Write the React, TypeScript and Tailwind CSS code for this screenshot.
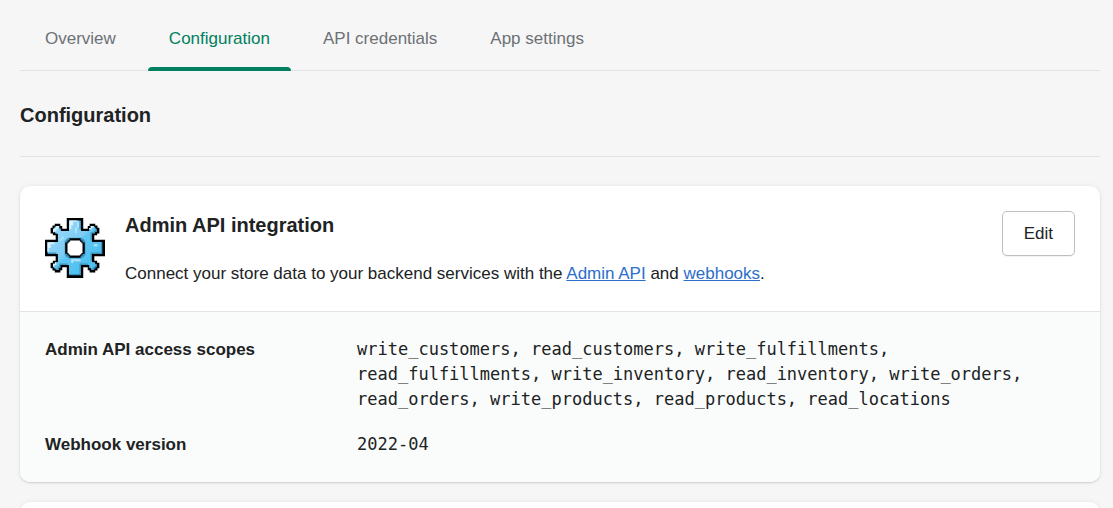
import React from "react";

type Point = [number, number];

const tabs = ["Overview", "Configuration", "API credentials", "App settings"];

const scopes = [
  "write_customers",
  "read_customers",
  "write_fulfillments",
  "read_fulfillments",
  "write_inventory",
  "read_inventory",
  "write_orders",
  "read_orders",
  "write_products",
  "read_products",
  "read_locations",
];

// Builds a closed shape on the 32x32 grid from its top-left quarter.
function mirrored(quarter: Point[]): string {
  const flipX = (p: Point[]): Point[] => p.map(([x, y]) => [32 - x, y]);
  const flipY = (p: Point[]): Point[] => p.map(([x, y]) => [x, 32 - y]);
  const left = [...quarter, ...flipY(quarter).reverse()];
  const all = [...left, ...flipX(left).reverse()];
  return "M" + all.map((p) => p.join(" ")).join("L") + "Z";
}

const gearOuter = mirrored([
  [11.6, 0], [11.6, 5.7], [9.2, 5.7], [9.2, 4.2], [8.2, 4.2], [8.2, 3], [5.2, 3], [5.2, 4], [4, 4],
  [4, 5.2], [3, 5.2], [3, 8.2], [4.2, 8.2], [4.2, 9.2], [5.7, 9.2], [5.7, 11.6], [0, 11.6],
]);

const gearInner = mirrored([
  [12.8, 1.3], [12.8, 6.9], [8.4, 6.9], [8.4, 5.3], [7.6, 5.3], [7.6, 4.3], [5.6, 4.3],
  [5.6, 5], [5, 5], [5, 5.6], [4.3, 5.6], [4.3, 7.6], [5.3, 7.6], [5.3, 8.4], [6.9, 8.4],
  [6.9, 12.8], [1.3, 12.8],
]);

const holeShade = mirrored([[12, 10.5], [12, 11.2], [11.2, 11.2], [11.2, 12], [10.5, 12]]);
const holeOuter = mirrored([[13, 10.8], [13, 12], [12, 12], [12, 13], [10.8, 13]]);
const holeInner = mirrored([[13.4, 12], [13.4, 12.6], [12.6, 12.6], [12.6, 13.4], [12, 13.4]]);

function GearIcon() {
  return (
    <svg viewBox="0 0 32 32" className="mt-[7px] size-[60px] shrink-0" aria-hidden="true">
      <defs>
        <linearGradient id="gear-face" x1="0" y1="0" x2="1" y2="1">
          <stop offset="0.2" stopColor="#93d6f9" />
          <stop offset="0.48" stopColor="#7dccf5" />
          <stop offset="0.52" stopColor="#60c6f2" />
          <stop offset="0.8" stopColor="#50c0ef" />
        </linearGradient>
        <clipPath id="gear-clip">
          <path d={gearInner} />
        </clipPath>
      </defs>
      <path d={gearOuter} fill="#000" />
      <g clipPath="url(#gear-clip)">
        <path d={gearInner} fill="#3a93bf" />
        <path d={gearInner} fill="url(#gear-face)" transform="translate(-0.8 -0.8)" />
        <path d="M13 1h4v1h-2v2h-1v2h-1zM1 13h4v1H3v2H2v2H1zM6 4h2v1H7v1H6v1H5v1H4V6h1V5h1zM24 4h2v1h-1v1h-2V5h1zM4 24h1v-1h1v2H5v1H4z" fill="#d9f2fd" />
        <path d="M17 2h1v3h-1v3h-1V5h1zM26 14h2v1h-2zM14 22h5v1h-4v1h-1zM9 10h1v1H9zM8 11h1v1H8z" fill="#b5e3fb" />
      </g>
      <path d={holeShade} fill="#3a93bf" />
      <path d={holeOuter} fill="#000" />
      <path d={holeInner} fill="#fff" />
    </svg>
  );
}

export default function App() {
  return (
    <main className="flex h-screen flex-col overflow-hidden bg-[#f6f6f6] pr-[13px] pl-5 font-['Liberation_Sans',Arial,sans-serif] text-[17px] leading-[25px] text-[#202223]">
      <div role="tablist" className="flex shrink-0 gap-[11px] border-b border-[#e1e3e5] pl-1">
        {tabs.map((tab) => {
          const active = tab === "Configuration";
          return (
            <button
              key={tab}
              type="button"
              role="tab"
              aria-selected={active}
              className={
                active
                  ? "relative px-[21px] pt-[26px] pb-[19px] text-[#008060] after:absolute after:inset-x-0 after:-bottom-px after:h-1 after:rounded-t after:bg-[#008060]"
                  : "px-[21px] pt-[26px] pb-[19px] text-[#6d7175]"
              }
            >
              {tab}
            </button>
          );
        })}
      </div>

      <h1 className="shrink-0 border-b border-[#e1e3e5] pt-[29px] pb-[26px] text-xl leading-[30px] font-bold">
        Configuration
      </h1>

      <section className="mt-[29px] shrink-0 overflow-hidden rounded-[10px] bg-white shadow-[0_0_6px_rgba(23,24,24,0.05),0_1px_2px_rgba(0,0,0,0.15)]">
        <div className="flex items-start gap-5 p-[25px]">
          <GearIcon />
          <div className="flex-1">
            <h2 className="text-xl leading-7 font-bold">Admin API integration</h2>
            <p className="mt-[22px]">
              Connect your store data to your backend services with the{" "}
              <a href="#admin-api" className="text-[#2c6ecb] underline">Admin API</a> and{" "}
              <a href="#webhooks" className="text-[#2c6ecb] underline">webhooks</a>.
            </p>
          </div>
          <button
            type="button"
            className="rounded-[5px] border border-[#babfc3] bg-white px-[21px] py-[9px] shadow-[0_1px_0_rgba(0,0,0,0.05)]"
          >
            Edit
          </button>
        </div>
        <dl className="grid grid-cols-[292px_1fr] gap-5 border-t border-[#e1e3e5] bg-[#fafcfc] p-[25px]">
          <dt className="font-bold">Admin API access scopes</dt>
          <dd className="font-['DejaVu_Sans_Mono',monospace]">{scopes.join(", ")}</dd>
          <dt className="font-bold">Webhook version</dt>
          <dd className="font-['DejaVu_Sans_Mono',monospace]">2022-04</dd>
        </dl>
      </section>

      <section className="mt-5 shrink-0 rounded-[10px] bg-white p-[25px] shadow-[0_0_6px_rgba(23,24,24,0.05),0_1px_2px_rgba(0,0,0,0.15)]" />
    </main>
  );
}
